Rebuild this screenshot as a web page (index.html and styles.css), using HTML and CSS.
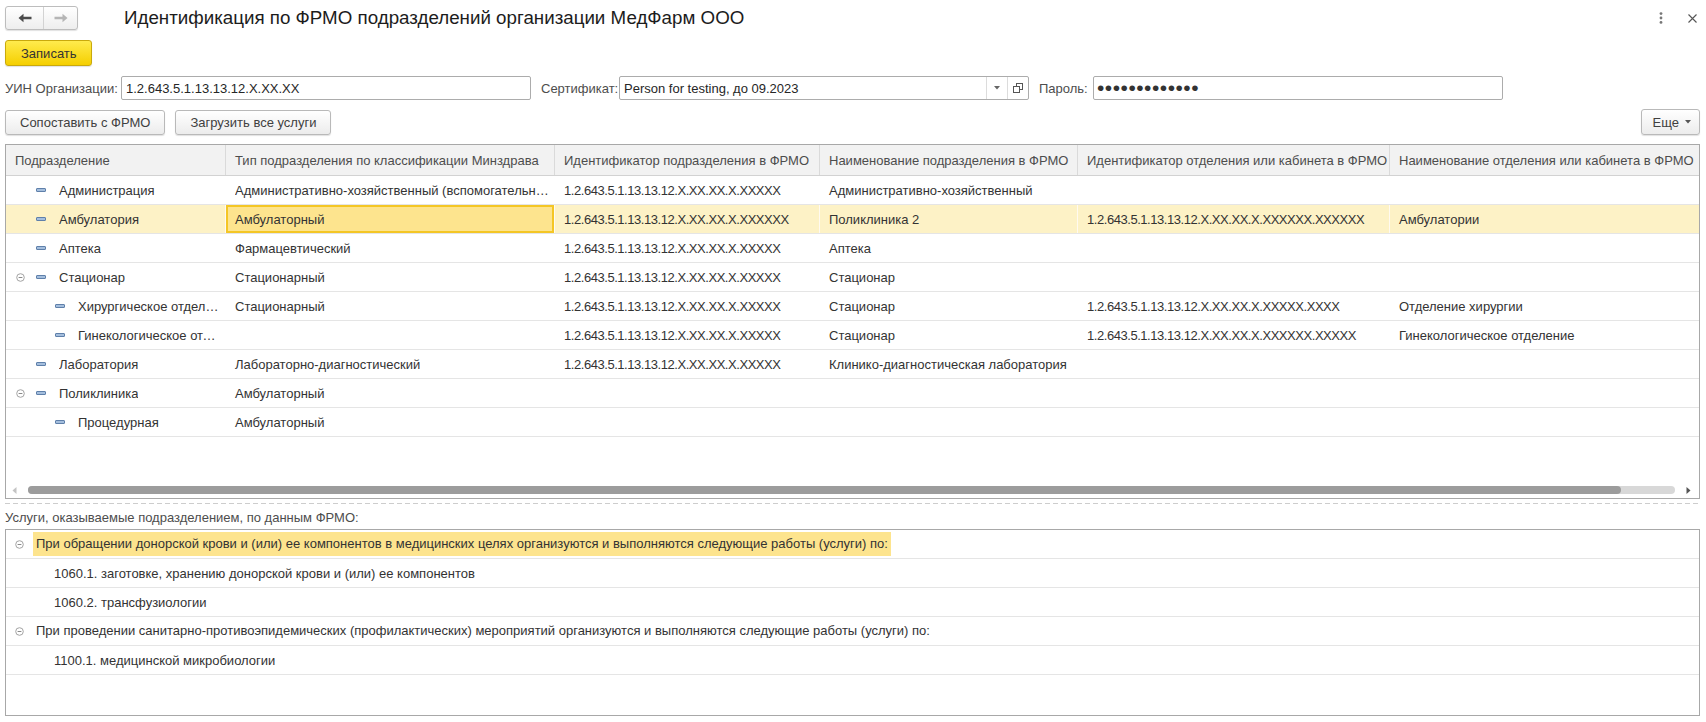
FILE: index.html
```html
<!DOCTYPE html>
<html lang="ru">
<head>
<meta charset="utf-8">
<title>Идентификация по ФРМО подразделений организации МедФарм ООО</title>
<link rel="stylesheet" href="styles.css">
</head>
<body>
<div class="page">
  <header class="titlebar">
    <div class="nav">
      <span class="nav-btn">
        <svg width="14" height="10" viewBox="0 0 14 10"><path d="M0.5 5 L5.5 0.8 L5.5 3.7 L13.5 3.7 L13.5 6.3 L5.5 6.3 L5.5 9.2 Z" fill="#4b4b4b"/></svg>
      </span>
      <span class="nav-btn nav-btn-2">
        <svg width="14" height="10" viewBox="0 0 14 10"><path d="M13.5 5 L8.5 0.8 L8.5 3.7 L0.5 3.7 L0.5 6.3 L8.5 6.3 L8.5 9.2 Z" fill="#b5b5b5"/></svg>
      </span>
    </div>
    <h1 class="title">Идентификация по ФРМО подразделений организации МедФарм ООО</h1>
    <div class="win-actions">
      <svg class="more" width="4" height="12" viewBox="0 0 4 12"><circle cx="2" cy="1.6" r="1.4" fill="#777"/><circle cx="2" cy="6" r="1.4" fill="#777"/><circle cx="2" cy="10.4" r="1.4" fill="#777"/></svg>
      <svg class="close" width="9" height="9" viewBox="0 0 9 9"><path d="M0.5 0.5 L8.5 8.5 M8.5 0.5 L0.5 8.5" stroke="#555" stroke-width="1.1"/></svg>
    </div>
  </header>

  <div class="cmdbar">
    <span class="btn btn-yellow">Записать</span>
  </div>

  <div class="form-row">
    <label class="lbl lbl-uin">УИН Организации:</label>
    <div class="field"><span class="field-text">1.2.643.5.1.13.13.12.X.XX.XX</span></div>
    <label class="lbl lbl-cert">Сертификат:</label>
    <div class="field field-cert">
      <span class="field-text">Person for testing, до 09.2023</span>
      <span class="field-btn">
        <svg width="6" height="4" viewBox="0 0 6 4"><path d="M0 0 H6 L3 3.5 Z" fill="#666"/></svg>
      </span>
      <span class="field-btn">
        <svg width="10" height="10" viewBox="0 0 10 10"><rect x="3.5" y="0.5" width="6" height="6" fill="none" stroke="#555"/><rect x="0.5" y="3.5" width="6" height="6" fill="#fff" stroke="#555"/></svg>
      </span>
    </div>
    <label class="lbl lbl-pass">Пароль:</label>
    <div class="field"><span class="field-text pass">•••••••••••••</span></div>
  </div>

  <div class="btn-row">
    <span class="btn">Сопоставить с ФРМО</span>
    <span class="btn">Загрузить все услуги</span>
    <span class="btn btn-more">Еще <svg width="6" height="4" viewBox="0 0 6 4"><path d="M0 0 H6 L3 3.5 Z" fill="#555"/></svg></span>
  </div>

  <div class="grid grid-main">
    <div class="grid-body">
      <div class="row head">
        <div class="cell">Подразделение</div>
        <div class="cell">Тип подразделения по классификации Минздрава</div>
        <div class="cell">Идентификатор подразделения в ФРМО</div>
        <div class="cell">Наименование подразделения в ФРМО</div>
        <div class="cell">Идентификатор отделения или кабинета в ФРМО</div>
        <div class="cell">Наименование отделения или кабинета в ФРМО</div>
      </div>

      <div class="row">
        <div class="cell tree lvl0"><span class="exp"></span><span class="ico"></span><span class="txt">Администрация</span></div>
        <div class="cell"><span class="txt">Административно-хозяйственный (вспомогательный)</span></div>
        <div class="cell id">1.2.643.5.1.13.13.12.X.XX.XX.X.XXXXX</div>
        <div class="cell">Административно-хозяйственный</div>
        <div class="cell id"></div>
        <div class="cell"></div>
      </div>

      <div class="row selected">
        <div class="cell tree lvl0"><span class="exp"></span><span class="ico"></span><span class="txt">Амбулатория</span></div>
        <div class="cell current">Амбулаторный</div>
        <div class="cell id">1.2.643.5.1.13.13.12.X.XX.XX.X.XXXXXX</div>
        <div class="cell">Поликлиника 2</div>
        <div class="cell id">1.2.643.5.1.13.13.12.X.XX.XX.X.XXXXXX.XXXXXX</div>
        <div class="cell">Амбулатории</div>
      </div>

      <div class="row">
        <div class="cell tree lvl0"><span class="exp"></span><span class="ico"></span><span class="txt">Аптека</span></div>
        <div class="cell">Фармацевтический</div>
        <div class="cell id">1.2.643.5.1.13.13.12.X.XX.XX.X.XXXXX</div>
        <div class="cell">Аптека</div>
        <div class="cell id"></div>
        <div class="cell"></div>
      </div>

      <div class="row">
        <div class="cell tree lvl0"><span class="exp"><svg width="9" height="9" viewBox="0 0 9 9"><circle cx="4.5" cy="4.5" r="3.8" fill="none" stroke="#a3a3a3"/><path d="M2.6 4.5 H6.4" stroke="#8a8a8a"/></svg></span><span class="ico"></span><span class="txt">Стационар</span></div>
        <div class="cell">Стационарный</div>
        <div class="cell id">1.2.643.5.1.13.13.12.X.XX.XX.X.XXXXX</div>
        <div class="cell">Стационар</div>
        <div class="cell id"></div>
        <div class="cell"></div>
      </div>

      <div class="row">
        <div class="cell tree lvl1"><span class="exp"></span><span class="ico"></span><span class="txt">Хирургическое отделение</span></div>
        <div class="cell">Стационарный</div>
        <div class="cell id">1.2.643.5.1.13.13.12.X.XX.XX.X.XXXXX</div>
        <div class="cell">Стационар</div>
        <div class="cell id">1.2.643.5.1.13.13.12.X.XX.XX.X.XXXXX.XXXX</div>
        <div class="cell">Отделение хирургии</div>
      </div>

      <div class="row">
        <div class="cell tree lvl1"><span class="exp"></span><span class="ico"></span><span class="txt">Гинекологическое отделение</span></div>
        <div class="cell"></div>
        <div class="cell id">1.2.643.5.1.13.13.12.X.XX.XX.X.XXXXX</div>
        <div class="cell">Стационар</div>
        <div class="cell id">1.2.643.5.1.13.13.12.X.XX.XX.X.XXXXXX.XXXXX</div>
        <div class="cell">Гинекологическое отделение</div>
      </div>

      <div class="row">
        <div class="cell tree lvl0"><span class="exp"></span><span class="ico"></span><span class="txt">Лаборатория</span></div>
        <div class="cell">Лабораторно-диагностический</div>
        <div class="cell id">1.2.643.5.1.13.13.12.X.XX.XX.X.XXXXX</div>
        <div class="cell">Клинико-диагностическая лаборатория</div>
        <div class="cell id"></div>
        <div class="cell"></div>
      </div>

      <div class="row">
        <div class="cell tree lvl0"><span class="exp"><svg width="9" height="9" viewBox="0 0 9 9"><circle cx="4.5" cy="4.5" r="3.8" fill="none" stroke="#a3a3a3"/><path d="M2.6 4.5 H6.4" stroke="#8a8a8a"/></svg></span><span class="ico"></span><span class="txt">Поликлиника</span></div>
        <div class="cell">Амбулаторный</div>
        <div class="cell id"></div>
        <div class="cell"></div>
        <div class="cell id"></div>
        <div class="cell"></div>
      </div>

      <div class="row">
        <div class="cell tree lvl1"><span class="exp"></span><span class="ico"></span><span class="txt">Процедурная</span></div>
        <div class="cell">Амбулаторный</div>
        <div class="cell id"></div>
        <div class="cell"></div>
        <div class="cell id"></div>
        <div class="cell"></div>
      </div>
    </div>

    <div class="hscroll">
      <svg class="arr" width="5" height="7" viewBox="0 0 5 7"><path d="M4.5 0 V7 L0.5 3.5 Z" fill="#c4c4c4"/></svg>
      <div class="track"><div class="thumb"></div></div>
      <svg class="arr" width="5" height="7" viewBox="0 0 5 7"><path d="M0.5 0 V7 L4.5 3.5 Z" fill="#555"/></svg>
    </div>
  </div>

  <div class="sep"></div>

  <div class="section-label">Услуги, оказываемые подразделением, по данным ФРМО:</div>

  <div class="grid grid-services">
    <div class="srow group">
      <svg width="9" height="9" viewBox="0 0 9 9"><circle cx="4.5" cy="4.5" r="3.8" fill="none" stroke="#a3a3a3"/><path d="M2.6 4.5 H6.4" stroke="#8a8a8a"/></svg>
      <span class="stxt hl">При обращении донорской крови и (или) ее компонентов в медицинских целях организуются и выполняются следующие работы (услуги) по:</span>
    </div>
    <div class="srow child"><span class="stxt">1060.1. заготовке, хранению донорской крови и (или) ее компонентов</span></div>
    <div class="srow child"><span class="stxt">1060.2. трансфузиологии</span></div>
    <div class="srow group">
      <svg width="9" height="9" viewBox="0 0 9 9"><circle cx="4.5" cy="4.5" r="3.8" fill="none" stroke="#a3a3a3"/><path d="M2.6 4.5 H6.4" stroke="#8a8a8a"/></svg>
      <span class="stxt">При проведении санитарно-противоэпидемических (профилактических) мероприятий организуются и выполняются следующие работы (услуги) по:</span>
    </div>
    <div class="srow child"><span class="stxt">1100.1. медицинской микробиологии</span></div>
  </div>
</div>
</body>
</html>
```

FILE: styles.css
```css
* { box-sizing: border-box; }

html, body {
  margin: 0;
  padding: 0;
  background: #fff;
}

body {
  width: 1706px;
  height: 722px;
  overflow: hidden;
  font-family: "Liberation Sans", Arial, sans-serif;
  font-size: 13px;
  color: #333;
}

.page {
  padding: 0 6px 0 5px;
}

/* ---------- title bar ---------- */
.titlebar {
  display: flex;
  align-items: flex-start;
  height: 36px;
  padding-top: 6px;
}

.nav {
  display: flex;
  height: 24px;
  border: 1px solid #bdbdbd;
  border-radius: 3px;
  background: linear-gradient(#ffffff, #eeeeee);
  box-shadow: 0 1px 1px rgba(0, 0, 0, 0.12);
}

.nav-btn {
  width: 37px;
  display: flex;
  align-items: center;
  justify-content: center;
}

.nav-btn-2 {
  width: 34px;
  border-left: 1px solid #d3d3d3;
}

.title {
  margin: -1px 0 0 46px;
  font-size: 18.75px;
  line-height: 26px;
  font-weight: normal;
  color: #1c1c1c;
}

.win-actions {
  margin-left: auto;
  display: flex;
  align-items: center;
  height: 24px;
  padding-right: 3px;
}

.more {
  margin-right: 25px;
}

/* ---------- buttons ---------- */
.btn {
  display: inline-flex;
  align-items: center;
  height: 25px;
  padding: 0 14px;
  border: 1px solid #b9b9b9;
  border-radius: 3px;
  background: linear-gradient(#ffffff, #ececec);
  box-shadow: 0 1px 1px rgba(0, 0, 0, 0.12);
  color: #404040;
  white-space: nowrap;
}

.cmdbar {
  margin-top: 4px;
  display: flex;
}

.btn-yellow {
  height: 26px;
  padding: 0 14px 0 15px;
  border-color: #c9a90c;
  background: linear-gradient(#ffeb4d, #f5cf00);
  color: #333;
}

/* ---------- form row ---------- */
.form-row {
  margin-top: 10px;
  display: flex;
  align-items: center;
  height: 24px;
}

.lbl {
  flex: none;
  color: #4d4d4d;
  white-space: nowrap;
}

.lbl-uin { width: 116px; }
.lbl-cert { width: 78px; margin-left: 10px; }
.lbl-pass { width: 54px; margin-left: 10px; }

.field {
  flex: none;
  width: 410px;
  height: 24px;
  display: flex;
  align-items: center;
  border: 1px solid #acacac;
  border-radius: 2px;
  background: #fff;
}

.field-text {
  flex: 1;
  min-width: 0;
  padding-left: 4px;
  color: #262626;
  white-space: nowrap;
  overflow: hidden;
}

.field-text.pass {
  font-size: 21px;
  line-height: 20px;
  letter-spacing: 0.5px;
  color: #333;
  padding-left: 3px;
}

.field-btn {
  flex: none;
  width: 21px;
  height: 100%;
  display: flex;
  align-items: center;
  justify-content: center;
  border-left: 1px solid #dcdcdc;
}

/* ---------- buttons row ---------- */
.btn-row {
  margin-top: 9px;
  display: flex;
  align-items: flex-end;
  height: 26px;
  gap: 10px;
}

.btn-more {
  margin-left: auto;
  height: 26px;
  padding: 0 8px 0 11px;
  gap: 6px;
}

/* ---------- grids ---------- */
.grid {
  border: 1px solid #a8a8a8;
  overflow: hidden;
  background: #fff;
}

.grid-main {
  margin-top: 9px;
  height: 355px;
  display: flex;
  flex-direction: column;
}

.grid-body {
  flex: 1;
  overflow: hidden;
}

.row {
  display: grid;
  grid-template-columns: 220px 329px 265px 258px 312px 340px;
  width: 1724px;
  height: 29px;
  border-bottom: 1px solid #e5e5e5;
}

.row.head {
  height: 31px;
  background: #f2f2f2;
  border-bottom: 1px solid #d2d2d2;
  color: #4d4d4d;
}

.cell {
  display: flex;
  align-items: center;
  min-width: 0;
  padding: 0 4px 0 9px;
  border-right: 1px solid transparent;
  white-space: nowrap;
  overflow: hidden;
}

.row.head .cell {
  border-right-color: #dadada;
}

.cell .txt {
  overflow: hidden;
  text-overflow: ellipsis;
  white-space: nowrap;
  min-width: 0;
}

.cell.id {
  letter-spacing: -0.45px;
}

.row.selected {
  background: #fdf2c6;
}

.row.selected .cell {
  border-right-color: #fffaf0;
}

.row.selected .cell.current {
  background: #fde48e;
  box-shadow: inset 0 0 0 2px #f4c625;
}

.tree {
  padding-left: 10px;
}

.tree.lvl1 {
  padding-left: 28px;
}

.exp {
  flex: none;
  width: 20px;
  display: flex;
  align-items: center;
}

.tree.lvl1 .exp {
  width: 21px;
}

.ico {
  flex: none;
  width: 10px;
  height: 4px;
  margin-right: 13px;
  border: 1px solid #5f80aa;
  border-radius: 1px;
  background: #a4bedd;
}

/* ---------- horizontal scrollbar ---------- */
.hscroll {
  flex: none;
  height: 14px;
  display: flex;
  align-items: center;
  padding: 0 8px 0 6px;
  margin-bottom: 1px;
}

.track {
  flex: 1;
  height: 8px;
  margin: 0 11px;
  border-radius: 4px;
  background: #d8d8d8;
}

.thumb {
  width: 96.7%;
  height: 100%;
  border-radius: 4px;
  background: #9c9c9c;
}

/* ---------- separator and services ---------- */
.sep {
  margin-top: 4px;
  height: 1px;
  background: repeating-linear-gradient(to right, #cdcdcd 0 5px, transparent 5px 8px);
}

.section-label {
  margin-top: 5px;
  height: 18px;
  line-height: 18px;
  color: #4d4d4d;
}

.grid-services {
  margin-top: 2px;
  height: 187px;
}

.srow {
  display: flex;
  align-items: center;
  height: 29px;
  border-bottom: 1px solid #e5e5e5;
  white-space: nowrap;
}

.srow.group {
  padding-left: 9px;
}

.srow.group svg {
  flex: none;
  margin-right: 9px;
}

.srow.group .stxt {
  padding: 0 3px;
  line-height: 24px;
}

.srow.child {
  padding-left: 48px;
}

.stxt.hl {
  background: #fde48e;
}
```
